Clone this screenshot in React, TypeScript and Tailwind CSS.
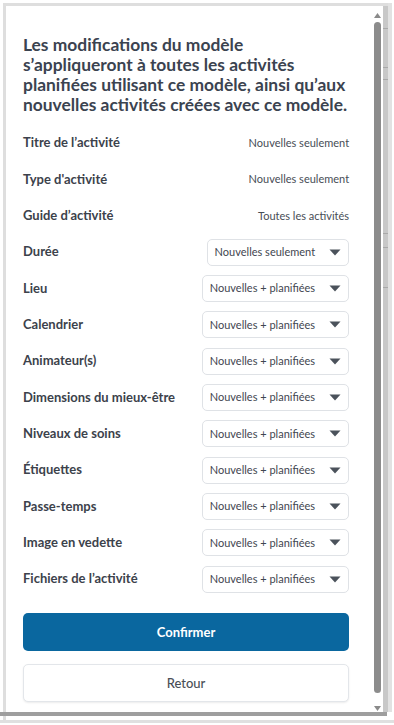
import React from "react";

const rowsStatic = [
  ["Titre de l’activité", "Nouvelles seulement"],
  ["Type d'activité", "Nouvelles seulement"],
  ["Guide d’activité", "Toutes les activités"],
];

const rowsSelect = [
  ["Durée", "Nouvelles seulement"],
  ["Lieu", "Nouvelles + planifiées"],
  ["Calendrier", "Nouvelles + planifiées"],
  ["Animateur(s)", "Nouvelles + planifiées"],
  ["Dimensions du mieux-être", "Nouvelles + planifiées"],
  ["Niveaux de soins", "Nouvelles + planifiées"],
  ["Étiquettes", "Nouvelles + planifiées"],
  ["Passe-temps", "Nouvelles + planifiées"],
  ["Image en vedette", "Nouvelles + planifiées"],
  ["Fichiers de l’activité", "Nouvelles + planifiées"],
];

function Caret() {
  return (
    <svg width="12" height="7" viewBox="0 0 12 7" className="shrink-0">
      <path d="M0.5 0.5 L11.5 0.5 L6 6.5 Z" fill="#4b525b" />
    </svg>
  );
}

export default function App() {
  return (
    <div
      className="w-[394px] h-[725px] bg-white overflow-hidden flex flex-col"
      style={{ fontFamily: "Lato, 'Noto Sans', sans-serif" }}
    >
      <div className="pt-[3px] pl-[3px] flex">
        <div className="w-[385px] h-[709px] border-t-[3px] border-l-[3px] border-[#dedede] flex">
          {/* content */}
          <div className="w-[369px] pl-[17px] pr-[24px] flex flex-col">
            <h1 className="mt-[29px] text-[17.4px] leading-[20px] font-bold text-[#3b4350]">
              Les modifications du modèle
              <br />
              s’appliqueront à toutes les activités
              <br />
              planifiées utilisant ce modèle, ainsi qu’aux
              <br />
              nouvelles activités créées avec ce modèle.
            </h1>
            <div className="mt-[10px] flex flex-col">
              {rowsStatic.map(([l, v]) => (
                <div key={l} className="h-[36.33px] flex items-center justify-between">
                  <span className="text-[13px] font-bold text-[#3c424b]">{l}</span>
                  <span className="text-[11px] text-[#474d56]">{v}</span>
                </div>
              ))}
              {rowsSelect.map(([l, v]) => (
                <div key={l} className="h-[36.33px] flex items-center justify-between">
                  <span className="text-[13px] font-bold text-[#3c424b]">{l}</span>
                  <div className="h-[27px] flex items-center gap-[14px] pl-[7px] pr-[7px] border border-[#dfe2e6] rounded-[5px] bg-white">
                    <span className="text-[11px] text-[#3f4650]">{v}</span>
                    <Caret />
                  </div>
                </div>
              ))}
            </div>
            <button className="mt-[16px] h-[38px] w-full rounded-[5px] bg-[#0a679f] text-white text-[13px] font-bold">
              Confirmer
            </button>
            <button className="mt-[13px] h-[38px] w-full rounded-[5px] bg-white border border-[#e3e6ea] shadow-[0_1px_2px_rgba(0,0,0,0.08)] text-[#4a4f57] text-[13px] font-medium">
              Retour
            </button>
          </div>
          {/* scrollbar */}
          <div className="w-[9px] flex flex-col items-center">
            <svg width="7" height="5" viewBox="0 0 7 5" className="mt-[7px]">
              <path d="M0 5 L3.5 0 L7 5 Z" fill="#8a8a8a" />
            </svg>
            <div className="mt-[4px] w-[7px] h-[671px] rounded-full bg-[#8c8c8c]" />
            <svg width="7" height="5" viewBox="0 0 7 5" className="mt-[13px]">
              <path d="M0 0 L7 0 L3.5 5 Z" fill="#8a8a8a" />
            </svg>
          </div>
          <div className="w-[1px]" />
          <div className="w-[5px] bg-[#c8c8c8] flex flex-col">
            <div className="h-[22px]" />
            <div className="h-px bg-[#a9a9a9]" />
            <div className="h-[38px]" />
            <div className="h-px bg-[#a9a9a9]" />
            <div className="h-[11px]" />
            <div className="h-px bg-[#a9a9a9]" />
            <div className="h-[153px]" />
            <div className="h-px bg-[#a9a9a9]" />
            <div className="h-[13px]" />
            <div className="h-px bg-[#a9a9a9]" />
            <div className="h-[39px]" />
            <div className="h-px bg-[#a9a9a9]" />
          </div>
        </div>
        <div className="w-[4px] h-[709px] bg-[#e2e2e2]" />
      </div>
      <div className="w-[387px] h-[4px] bg-[#9e9e9e]" />
      <div className="pl-[3px] flex">
        <div className="w-[3px] h-[4px] bg-[#dedede]" />
      </div>
      <div className="h-[3px] w-full bg-[#e0e0e0]" />
    </div>
  );
}
